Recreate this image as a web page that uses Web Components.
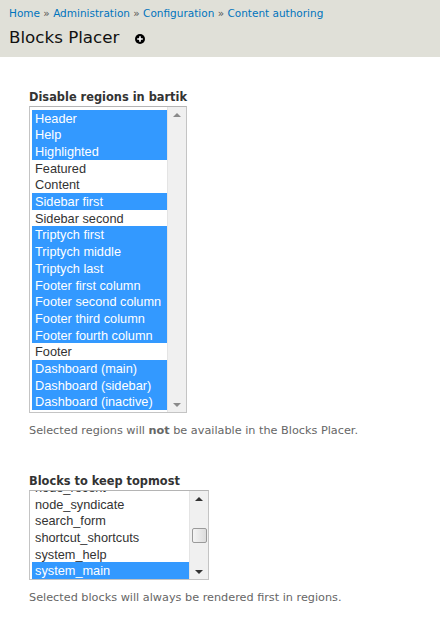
<!DOCTYPE html>
<html>
<head>
<meta charset="utf-8">
<style>
  html, body { margin: 0; padding: 0; background: #fff; }
  body { font-family: "DejaVu Sans", sans-serif; width: 440px; height: 634px; overflow: hidden; }
</style>
</head>
<body>
<page-head title="Blocks Placer">
  <a href="#">Home</a><a href="#">Administration</a><a href="#">Configuration</a><a href="#">Content authoring</a>
</page-head>

<form-field label="Disable regions in bartik">
  <list-box style="--w:158px;--h:307px;--thumb:none;--arrow:#8a8a8a">
    <list-option selected>Header</list-option>
    <list-option selected>Help</list-option>
    <list-option selected>Highlighted</list-option>
    <list-option>Featured</list-option>
    <list-option>Content</list-option>
    <list-option selected>Sidebar first</list-option>
    <list-option>Sidebar second</list-option>
    <list-option selected>Triptych first</list-option>
    <list-option selected>Triptych middle</list-option>
    <list-option selected>Triptych last</list-option>
    <list-option selected>Footer first column</list-option>
    <list-option selected>Footer second column</list-option>
    <list-option selected>Footer third column</list-option>
    <list-option selected>Footer fourth column</list-option>
    <list-option>Footer</list-option>
    <list-option selected>Dashboard (main)</list-option>
    <list-option selected>Dashboard (sidebar)</list-option>
    <list-option selected>Dashboard (inactive)</list-option>
  </list-box>
  <span slot="help">Selected regions will <b>not</b> be available in the Blocks Placer.</span>
</form-field>

<form-field label="Blocks to keep topmost" style="--top:35px;--label-lh:17px">
  <list-box style="--w:180px;--h:90px;--thumb:block;--arrow:#333;--pad-b:0px;--row-lh:18.7px">
    <list-option>node_recent</list-option>
    <list-option>node_syndicate</list-option>
    <list-option>search_form</list-option>
    <list-option>shortcut_shortcuts</list-option>
    <list-option>system_help</list-option>
    <list-option selected>system_main</list-option>
  </list-box>
  <span slot="help">Selected blocks will always be rendered first in regions.</span>
</form-field>

<script>
class PageHead extends HTMLElement {
  constructor() {
    super();
    this.attachShadow({ mode: 'open' });
  }
  connectedCallback() {
    this.shadowRoot.innerHTML = `
      <style>
        :host { display: block; background: #e0e0d8; height: 57px; box-sizing: border-box; padding: 6px 9px 0; }
        .crumbs { font-size: 10.5px; line-height: 14px; color: #555; white-space: nowrap; }
        .crumbs span { color: #0074bd; }
        .row { display: flex; align-items: center; margin-top: 5px; }
        h1 { margin: 0; font-weight: 400; font-size: 16.7px; line-height: 24px; color: #111; }
        svg { margin: 3px 0 0 16px; }
      </style>
      <div class="crumbs"></div>
      <div class="row">
        <h1>${this.getAttribute('title')}</h1>
        <svg width="10" height="10" viewBox="0 0 10 10">
          <circle cx="5" cy="5" r="5" fill="#000"/>
          <path d="M5 2.2v5.6M2.2 5h5.6" stroke="#fff" stroke-width="1.6"/>
        </svg>
      </div>
    `;
    const crumbs = this.shadowRoot.querySelector('.crumbs');
    [...this.querySelectorAll('a')].forEach((a, i) => {
      if (i) crumbs.append(' » ');
      const s = document.createElement('span');
      s.textContent = a.textContent;
      crumbs.append(s);
    });
  }
}

class FormField extends HTMLElement {
  constructor() {
    super();
    this.attachShadow({ mode: 'open' });
  }
  connectedCallback() {
    this.shadowRoot.innerHTML = `
      <style>
        :host { display: block; padding: var(--top, 31px) 0 0 29px; }
        label { display: block; font-weight: 700; font-size: 11.4px; line-height: var(--label-lh, 18px); color: #333; }
        .help { font-size: 11.25px; line-height: 14px; color: #666; margin-top: 11px; }
      </style>
      <label>${this.getAttribute('label')}</label>
      <slot></slot>
      <div class="help"><slot name="help"></slot></div>
    `;
  }
}

class ListBox extends HTMLElement {
  constructor() {
    super();
    this.attachShadow({ mode: 'open' });
    this.shadowRoot.innerHTML = `
      <style>
        :host { display: flex; box-sizing: border-box; width: var(--w); height: var(--h); border: 1px solid #c4c4c4; border-top-color: #b4b4b4; background: #fff; }
        .items { flex: 1; min-width: 0; padding: 2px 0 var(--pad-b, 2px) 2px; display: flex; flex-direction: column; justify-content: flex-end; overflow: hidden; }
        .bar { width: 19px; flex: none; background: #f0f0f0; border-left: 1px solid #e4e4e4; box-sizing: border-box; display: flex; flex-direction: column; align-items: center; justify-content: space-between; padding: 6px 0 5px; }
        .arrow { width: 0; height: 0; border: 4px solid transparent; border-top: 0; border-bottom-color: var(--arrow); }
        .arrow.down { border: 4px solid transparent; border-bottom: 0; border-top-color: var(--arrow); }
        .thumb { display: var(--thumb); width: 15px; height: 15px; box-sizing: border-box; border: 1px solid #9a9a9a; border-radius: 2px; background: linear-gradient(90deg, #f4f4f4, #dcdcdc); }
        .track { flex: 1; display: flex; align-items: center; }
      </style>
      <div class="items"><slot></slot></div>
      <div class="bar">
        <div class="arrow"></div>
        <div class="track"><div class="thumb"></div></div>
        <div class="arrow down"></div>
      </div>
    `;
  }
}

class ListOption extends HTMLElement {
  constructor() {
    super();
    this.attachShadow({ mode: 'open' });
    this.shadowRoot.innerHTML = `
      <style>
        :host { display: block; flex: none; height: 16.7px; line-height: var(--row-lh, 17.7px); padding-left: 3px; font-family: "Liberation Sans", Arial, sans-serif; font-size: 12.75px; color: #333; white-space: nowrap; }
        :host([selected]) { background: #3399ff; color: #fff; }
      </style>
      <slot></slot>
    `;
  }
}

customElements.define('page-head', PageHead);
customElements.define('form-field', FormField);
customElements.define('list-box', ListBox);
customElements.define('list-option', ListOption);
</script>
</body>
</html>
